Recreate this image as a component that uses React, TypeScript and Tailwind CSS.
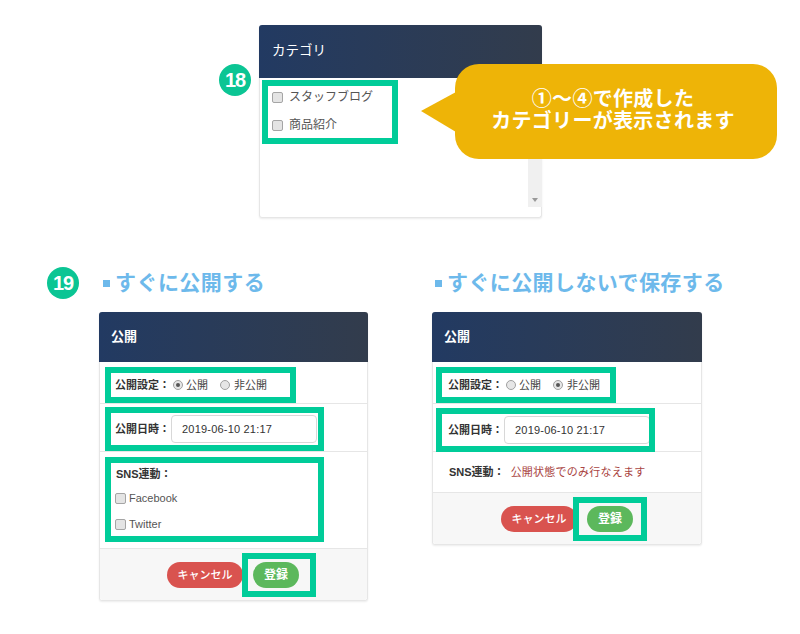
const FONT = "font-['Liberation_Sans','Noto_Sans_CJK_JP',sans-serif]";

function Check() {
  return <span className="block w-[11px] h-[11px] shrink-0 rounded-[2px] border border-[#a5a5a5] bg-[#e4e4e4]" />;
}

function Radio({ on }: { on: boolean }) {
  return (
    <span className="flex items-center justify-center w-[10px] h-[10px] shrink-0 rounded-full border border-[#a0a0a0] bg-[#e6e6e6]">
      {on && <span className="block w-[4px] h-[4px] rounded-full bg-[#555]" />}
    </span>
  );
}

function Buttons({ wrap, box }: { wrap: string; box: string }) {
  return (
    <div className={`flex items-center h-[51px] pt-[1px] bg-[#f7f7f7] rounded-b-[3px] ${wrap}`}>
      <span className="flex items-center justify-center w-[76px] h-[26px] shrink-0 rounded-full bg-[#d9534f] text-white text-[11px] font-medium">キャンセル</span>
      <span className={`flex items-center w-[74px] h-[44px] shrink-0 border-[6px] border-[#00cc99] ${box}`}>
        <span className="flex items-center justify-center w-[46px] h-[26px] shrink-0 rounded-full bg-[#5cb85c] text-white text-[12px] font-bold">登録</span>
      </span>
    </div>
  );
}

function Publish({ on, width, setBox, rowPad, dateBox, wrap, box, children }: { on: boolean; width: string; setBox: string; rowPad: string; dateBox: string; wrap: string; box: string; children: React.ReactNode }) {
  return (
    <div className={`${width} mt-[13px] rounded-[3px] border-x border-b border-[#e6e6e6] shadow-[0_1px_2px_rgba(0,0,0,0.08)]`}>
      <div className="flex items-center h-[50px] -mx-px pl-[12px] rounded-t-[3px] bg-linear-to-r from-[#223a62] to-[#323c4c] text-white text-[13px] font-bold">公開</div>
      <div className="flex items-end h-[42px] pl-[5px] border-b border-[#e6e6e6]">
        <div className={`flex items-center h-[36px] ${setBox} border-[6px] border-[#00cc99] text-[11px] text-[#444]`}>
          <b className="text-[#333] mr-[3px] whitespace-nowrap">公開設定：</b>
          <Radio on={on} />
          <span className="ml-[3px] mr-[12px] whitespace-nowrap">公開</span>
          <Radio on={!on} />
          <span className="ml-[4px] whitespace-nowrap">非公開</span>
        </div>
      </div>
      <div className={`flex items-end h-[48px] border-b border-[#e6e6e6] ${rowPad}`}>
        <div className={`flex items-center h-[44px] w-[219px] border-[6px] border-[#00cc99] text-[11px] ${dateBox}`}>
          <b className="text-[#333] whitespace-nowrap">公開日時：</b>
          <span className="flex items-center w-[146px] h-[28px] shrink-0 ml-[1px] pl-[10px] rounded-[4px] border border-[#d8d8d8] text-[#333] font-medium text-[11px] tracking-[0.2px] whitespace-nowrap">2019-06-10 21:17</span>
        </div>
      </div>
      {children}
      <Buttons wrap={wrap} box={box} />
    </div>
  );
}

export default function App() {
  return (
    <div className={`relative w-[800px] h-[634px] overflow-hidden bg-white ${FONT}`}>
      <div className="flex items-start pt-[25px] pl-[219px]">
        <span className="flex items-center justify-center w-[32px] h-[32px] mt-[39px] rounded-full bg-[#0bc594] text-white text-[20px] font-bold tracking-[-1px]">18</span>
        <div className="ml-[8px] w-[283px] h-[193px] rounded-[3px] border-x border-b border-[#e6e6e6] shadow-[0_1px_2px_rgba(0,0,0,0.08)]">
          <div className="flex items-center h-[53px] -mx-px pl-[13px] rounded-t-[3px] bg-linear-to-r from-[#223a62] to-[#323c4c] text-white text-[13.5px]">カテゴリ</div>
          <div className="relative">
            <div className="ml-[2px] mt-[2px] w-[136px] h-[64px] border-[6px] border-[#00cc99] pl-[4px] pt-[1px] text-[12px] text-[#555]">
              <div className="flex items-center gap-[6px] h-[20px]"><Check /><span>スタッフブログ</span></div>
              <div className="flex items-center gap-[6px] h-[20px] mt-[8px]"><Check /><span>商品紹介</span></div>
            </div>
            <div className="absolute -right-px top-0 h-[127px] w-[14px] bg-[#f0f0f0]">
              <span className="absolute bottom-[5px] left-[4px] w-0 h-0 border-x-[3px] border-t-[4px] border-x-transparent border-t-[#999]" />
            </div>
          </div>
        </div>
      </div>

      <div className="absolute left-[455px] top-[64px] flex flex-col items-center justify-center w-[322px] h-[95px] pr-[6px] pb-[4px] rounded-[24px] bg-[#eeb407] text-white text-[20px] font-bold leading-[22px] tracking-[0.3px]">
        <svg className="absolute left-[-34px] top-[28px]" width="35" height="40" viewBox="0 0 35 40"><path d="M35 0 L0 19 L35 40 Z" fill="#eeb407" /></svg>
        <span>①～④で作成した</span>
        <span>カテゴリーが表示されます</span>
      </div>

      <div className="flex items-start pl-[47px] mt-[49px]">
        <span className="flex items-center justify-center w-[32px] h-[32px] rounded-full bg-[#0bc594] text-white text-[20px] font-bold tracking-[-1px]">19</span>
        <div className="ml-[20px] w-[269px]">
          <div className="flex items-center h-[32px] ml-[4px] text-[21px] font-bold tracking-[0.45px] text-[#6db9eb] whitespace-nowrap"><span className="w-[7px] h-[7px] shrink-0 bg-[#6db9eb] mr-[5px]" />すぐに公開する</div>
          <Publish on width="w-[269px]" setBox="w-[191px] pl-[4px]" rowPad="pl-[5px]" dateBox="pl-[4px]" wrap="pl-[67px]" box="-ml-[1px] pl-[5px]">
            <div className="flex flex-col h-[97px] pl-[5px] pt-[5px] border-b border-[#e6e6e6]">
              <div className="flex flex-col h-[85px] w-[219px] border-[6px] border-[#00cc99] text-[11px]">
                <b className="ml-[5px] mt-[1px] h-[20px] flex items-center text-[#333]">SNS連動：</b>
                <div className="flex items-center gap-[3px] mt-[4px] h-[20px] ml-[4px] text-[#555]"><Check /><span>Facebook</span></div>
                <div className="flex items-center gap-[3px] mt-[6px] h-[20px] ml-[4px] text-[#555]"><Check /><span>Twitter</span></div>
              </div>
            </div>
          </Publish>
        </div>
        <div className="ml-[64px] w-[270px]">
          <div className="flex items-center h-[32px] ml-[3px] text-[21px] font-bold tracking-[0.4px] text-[#6db9eb] whitespace-nowrap"><span className="w-[7px] h-[7px] shrink-0 bg-[#6db9eb] mr-[5px]" />すぐに公開しないで保存する</div>
          <Publish on={false} width="w-[270px]" setBox="w-[180px] -ml-[2px] pl-[6px]" rowPad="pl-[3px]" dateBox="pl-[6px] -mb-px overflow-hidden" wrap="pl-[68px]" box="-ml-[4px] pl-[8px]">
            <div className="flex items-center h-[41px] pl-[16px] pt-[1px] border-b border-[#e6e6e6] text-[11px]">
              <b className="text-[#333] mr-[6px]">SNS連動：</b>
              <span className="text-[#a94442] text-[11px] tracking-[0.25px]">公開状態でのみ行なえます</span>
            </div>
          </Publish>
        </div>
      </div>
    </div>
  );
}
